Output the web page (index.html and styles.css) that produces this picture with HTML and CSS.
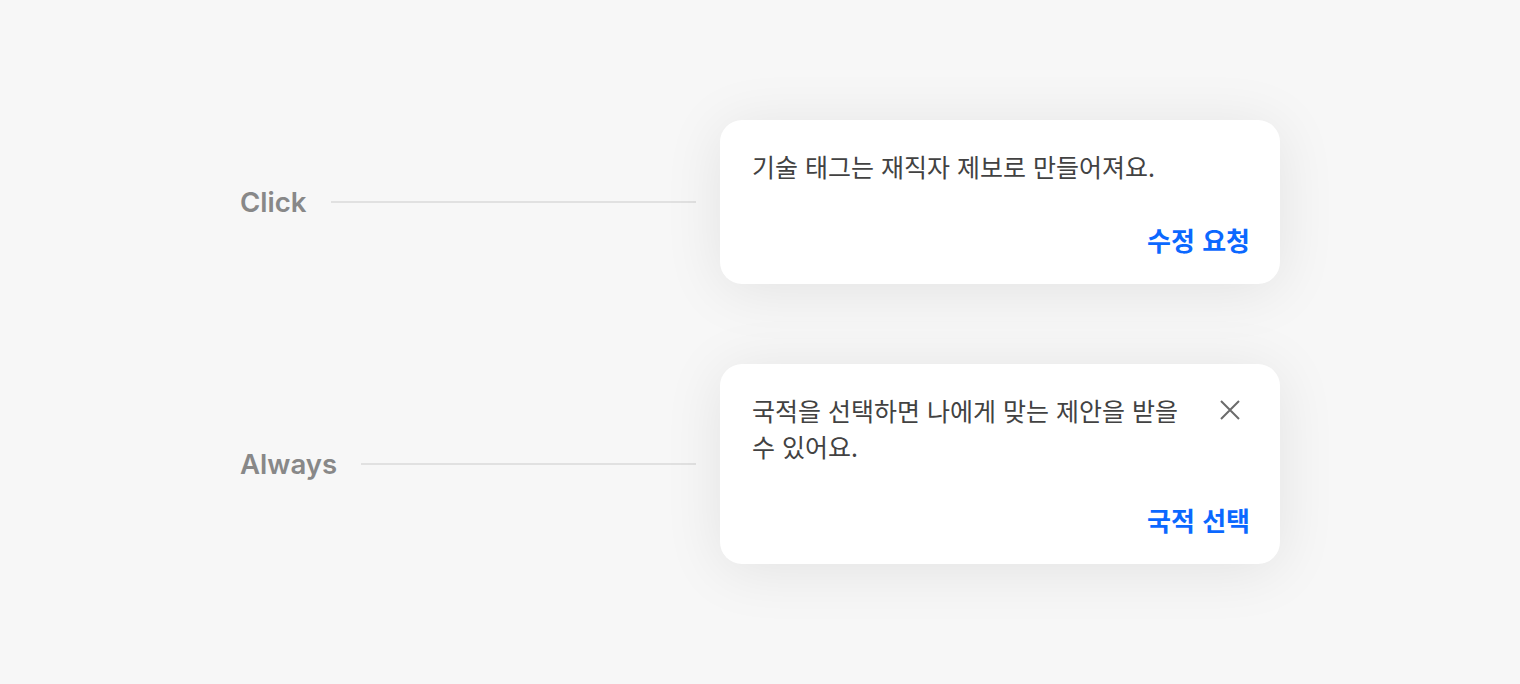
FILE: index.html
```html
<!DOCTYPE html>
<html lang="ko">
<head>
<meta charset="utf-8">
<link rel="stylesheet" href="styles.css">
</head>
<body>
<main class="page">
  <section class="row">
    <span class="label">Click</span>
    <span class="rule"></span>
    <div class="card">
      <p class="msg">기술 태그는 재직자 제보로 만들어져요.</p>
      <div class="actions"><button class="action">수정 요청</button></div>
    </div>
  </section>
  <section class="row">
    <span class="label">Always</span>
    <span class="rule"></span>
    <div class="card">
      <div class="head">
        <p class="msg">국적을 선택하면 나에게 맞는 제안을 받을 수 있어요.</p>
        <button class="close" aria-label="닫기">
          <svg width="24" height="24" viewBox="0 0 24 24"><path d="M3 3L21 21M21 3L3 21" stroke="#6b6b6b" stroke-width="2" fill="none"/></svg>
        </button>
      </div>
      <div class="actions"><button class="action">국적 선택</button></div>
    </div>
  </section>
</main>
</body>
</html>
```
FILE: styles.css
```css
html, body {
  margin: 0;
  padding: 0;
  background: #f7f7f7;
  font-family: "Inter", "Noto Sans CJK KR", sans-serif;
}
body {
  min-height: 684px;
}
.page {
  width: 1040px;
  margin-left: 240px;
  padding: 120px 0 120px;
  display: flex;
  flex-direction: column;
  gap: 80px;
}
.row {
  display: flex;
  align-items: center;
}
.label {
  font-family: "Inter", sans-serif;
  font-weight: 600;
  font-size: 27.6px;
  color: #888888;
}
.rule {
  flex: 1;
  height: 2px;
  background: #e1e1e1;
  margin: 0 24px;
}
.card {
  width: 560px;
  box-sizing: border-box;
  background: #fff;
  border-radius: 22px;
  padding: 28px 30px 28px 32px;
  box-shadow: 0 6px 60px rgba(0, 0, 0, 0.085);
}
.head {
  display: flex;
  align-items: flex-start;
  justify-content: space-between;
}
.msg {
  margin: 0;
  font-family: "Noto Sans CJK KR", sans-serif;
  font-size: 25px;
  line-height: 36px;
  color: #424242;
}
.head .msg { width: 440px; }
.close {
  border: 0;
  background: none;
  padding: 0;
  margin: 6px 8px 0 0;
  width: 24px;
  height: 24px;
  display: flex;
}
.actions {
  display: flex;
  justify-content: flex-end;
  margin-top: 40px;
}
.action {
  border: 0;
  background: none;
  padding: 0;
  font-family: "Noto Sans CJK KR", sans-serif;
  font-weight: 700;
  font-size: 26px;
  line-height: 32px;
  color: #0b68ff;
}
```
